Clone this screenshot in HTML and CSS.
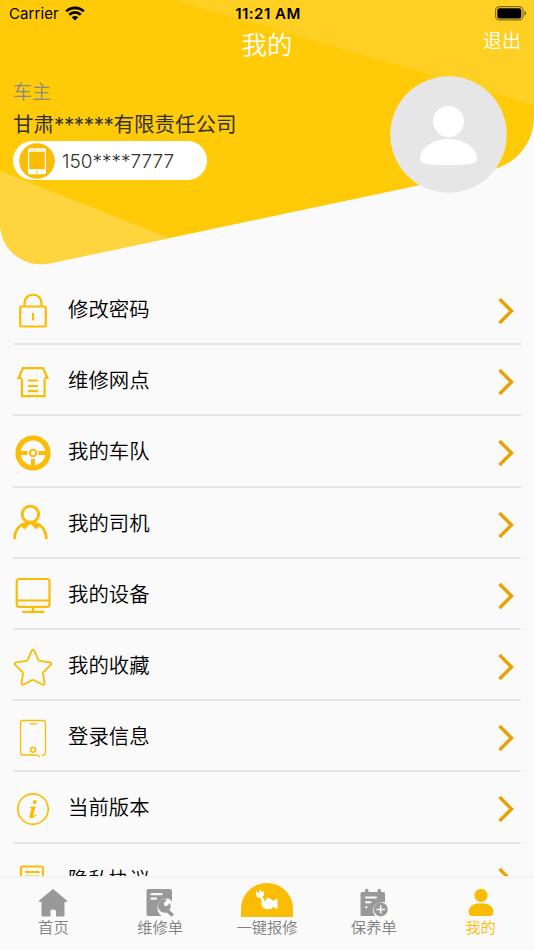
FILE: index.html
```html
<!DOCTYPE html>
<html lang="zh-CN">
  <head>
    <meta charset="UTF-8">
    <meta name="viewport" content="width=device-width, initial-scale=1.0">
    <title>我的</title>
    <link rel="stylesheet" href="styles.css">
  </head>

  <body>

    <header class="header">
      <svg class="header-bg" viewBox="0 0 534 273" aria-hidden="true">
        <defs>
          <clipPath id="shape">
            <path d="M0 0H534V117C534 143 516 165 489 170.500L49 263.500C23 268 0 249 0 223Z"/>
          </clipPath>
        </defs>
        <g clip-path="url(#shape)">
          <path fill="#ffcb08" d="M0 0H534V273H0Z"/>
          <path fill="#ffd024" d="M175 0H534V105Z"/>
          <path fill="#ffd53f" d="M0 171L169 238L100 273H0Z"/>
        </g>
      </svg>

      <div class="status">
        <div class="status-left">
          <span class="carrier">Carrier</span>
          <svg class="wifi" viewBox="0 0 20 15">
            <g fill="none" stroke="#000" stroke-width="2.700">
              <path d="M1.200 5.400C6.200 .6 13.800 .6 18.800 5.400"/>
              <path d="M4.300 8.700C7.600 5.600 12.400 5.600 15.700 8.700"/>
            </g>
            <path d="M6.700 11.200Q10 8.600 13.300 11.200L10 14.500Z"/>
          </svg>
        </div>
        <span class="time">11:21 AM</span>
        <svg class="battery" viewBox="0 0 32 15">
          <rect x=".6" y=".6" width="27.400" height="13.300" rx="3.800" fill="none" stroke="#806a1c" stroke-width="1.100"/>
          <rect x="2.300" y="2.200" width="24" height="10.200" rx="2.200"/>
          <path fill="#806a1c" d="M29.300 4.800Q31.200 5.600 31.200 7.300T29.300 9.800Z"/>
        </svg>
      </div>

      <div class="titlebar">
        <h1>我的</h1>
        <a class="logout" href="#">退出</a>
      </div>

      <div class="profile">
        <div class="owner">
          <p class="role">车主</p>
          <p class="company">甘肃<span class="stars">******</span>有限责任公司</p>
          <div class="phone">
            <svg viewBox="0 0 36 36">
              <circle cx="18" cy="18" r="17.800" fill="#fbbc05"/>
              <rect x="9.600" y="6" width="16.800" height="24.600" rx="1.300" fill="none" stroke="#fff" stroke-width="1.300"/>
              <path stroke="#fff" stroke-width="1.300" d="M10 8H26M10 27H26"/>
              <path fill="#fff" d="M9.600 27H26.400V30.500H9.600Z"/>
              <circle cx="18" cy="28.800" r=".9" fill="#fbbc05"/>
            </svg>
            <span>150****7777</span>
          </div>
        </div>
        <svg class="avatar" viewBox="0 0 117 117">
          <circle cx="58.500" cy="58.500" r="58.200" fill="#e6e6e6"/>
          <g fill="#fff">
            <circle cx="58.500" cy="45.500" r="15.400"/>
            <path d="M58.500 63C74 63 87 72 87 82.500C87 87.500 82 89 58.500 89S30 87.500 30 82.500C30 72 43 63 58.500 63Z"/>
          </g>
        </svg>
      </div>
    </header>

    <main class="menu">
      <a class="item" href="#">
        <svg class="icon" viewBox="0 0 40 40">
          <rect x="7.200" y="15.500" width="25.600" height="20" rx="1"/>
          <path d="M11.500 15.500V12.500C11.500 .8 28.500 .8 28.500 12.500V15.500M20 22V29.500"/>
        </svg>
        <span>修改密码</span>
        <svg class="arrow" viewBox="0 0 16 28"><path d="M1.500 2L13.500 14L1.500 26"/></svg>
      </a>
      <a class="item" href="#">
        <svg class="icon" viewBox="0 0 40 40">
          <path d="M8.900 17V34.200H31.600V17M8.900 16H5.500L10 6.200H30L34.500 16H31.600M15 18.500H25M15 24H25M15 29.200H25"/>
        </svg>
        <span>维修网点</span>
        <svg class="arrow" viewBox="0 0 16 28"><path d="M1.500 2L13.500 14L1.500 26"/></svg>
      </a>
      <a class="item" href="#">
        <svg class="icon" viewBox="0 0 40 40">
          <circle cx="20" cy="20" r="15" stroke-width="5.200"/>
          <circle cx="20" cy="20" r="3.200" stroke-width="2"/>
          <path stroke-width="4" d="M7 20H14.500M25.500 20H33M20 26V33"/>
        </svg>
        <span>我的车队</span>
        <svg class="arrow" viewBox="0 0 16 28"><path d="M1.500 2L13.500 14L1.500 26"/></svg>
      </a>
      <a class="item" href="#">
        <svg class="icon" viewBox="0 0 40 40">
          <circle cx="17.400" cy="9.300" r="8.200" stroke-width="2.900"/>
          <path stroke-width="2.900" stroke-linecap="round" d="M1.600 33C1.600 26 5.500 21 9.500 19.500L17.400 17L25.300 19.500C29.300 21 33.200 26 33.200 33M9 19.500L11.500 22.500L17.400 17L23.300 22.500L25.800 19.500"/>
        </svg>
        <span>我的司机</span>
        <svg class="arrow" viewBox="0 0 16 28"><path d="M1.500 2L13.500 14L1.500 26"/></svg>
      </a>
      <a class="item" href="#">
        <svg class="icon" viewBox="0 0 40 40">
          <rect x="3.700" y="3" width="32.800" height="27.800" rx="2.500"/>
          <path stroke-linecap="round" d="M4 24.500H36M20 31.200V35.500M10 35.800H30.500"/>
        </svg>
        <span>我的设备</span>
        <svg class="arrow" viewBox="0 0 16 28"><path d="M1.500 2L13.500 14L1.500 26"/></svg>
      </a>
      <a class="item" href="#">
        <svg class="icon" viewBox="0 0 40 40">
          <path stroke-width="1.800" stroke-linejoin="round" d="M18.500 4.200Q20 1.200 21.500 4.200L25.200 12.600Q25.600 13.600 26.800 13.800L36.800 15.300Q39.600 16 37.500 18.200L30.500 25Q29.800 25.800 30 27L31.500 35.500Q31.700 38.500 29 37.500L21.200 33.200Q20 32.600 18.800 33.200L11 37.500Q8.300 38.500 8.500 35.500L10 27Q10.200 25.800 9.500 25L2.500 18.200Q.4 16 3.200 15.300L13.200 13.800Q14.400 13.600 14.800 12.600Z"/>
        </svg>
        <span>我的收藏</span>
        <svg class="arrow" viewBox="0 0 16 28"><path d="M1.500 2L13.500 14L1.500 26"/></svg>
      </a>
      <a class="item" href="#">
        <svg class="icon" viewBox="0 0 40 40">
          <path stroke-width="1.300" stroke-linecap="round" d="M29 37.300C31.500 37.500 32.500 36.500 32.500 34.500V5Q32.500 2.500 30 2.500H10Q7.500 2.500 7.500 5V34.500Q7.500 37 10 37H22Q25 37 26.500 38.500M17 5.800H23.500"/>
          <circle cx="20" cy="31.800" r="2.500" stroke-width="1.600"/>
        </svg>
        <span>登录信息</span>
        <svg class="arrow" viewBox="0 0 16 28"><path d="M1.500 2L13.500 14L1.500 26"/></svg>
      </a>
      <a class="item" href="#">
        <svg class="icon" viewBox="0 0 40 40">
          <circle cx="20" cy="20" r="15.200" stroke-width="1.700"/>
          <circle class="solid" cx="21.800" cy="13" r="2.100"/>
          <path class="solid" d="M16.500 18.200L22.800 16.900L20.300 25.800Q20 27.200 21.500 26.200L23.200 24.700L23.800 25.300C21.500 28.400 19 29.700 17.200 29.200C16 28.800 16.200 27.300 16.600 26L18.500 19.600Q18.700 18.800 16.500 19Z"/>
        </svg>
        <span>当前版本</span>
        <svg class="arrow" viewBox="0 0 16 28"><path d="M1.500 2L13.500 14L1.500 26"/></svg>
      </a>
      <a class="item" href="#">
        <svg class="icon" viewBox="0 0 40 40">
          <path d="M8 36V7.500Q8 5.500 10 5.500H28Q30 5.500 30 7.500V36ZM12 11H26.500M12 15.500H26.500M12 21H26.500"/>
        </svg>
        <span>隐私协议</span>
        <svg class="arrow" viewBox="0 0 16 28"><path d="M1.500 2L13.500 14L1.500 26"/></svg>
      </a>
    </main>

    <nav class="tabbar">
      <a class="tab" href="#">
        <svg class="tab-icon" viewBox="0 0 30 30">
          <path d="M15 0L28.800 11.500V13H26.500V26Q26.500 27.500 25 27.500H18V22.500Q18 20.500 15.200 20.500T12.500 22.500V27.500H5Q3.500 27.500 3.500 26V13H1.200V11.500Z"/>
        </svg>
        <span>首页</span>
      </a>
      <a class="tab" href="#">
        <svg class="tab-icon" viewBox="0 0 30 30">
          <path d="M3 0H25Q27 0 27 2V12.500L24.500 10L21.500 9.500Q14 10.500 12.500 16.500V21Q13.500 25 17 27H3Q1.500 27 1.500 25V2Q1.500 0 3 0Z"/>
          <path stroke="#fafafa" stroke-width="2.200" stroke-linecap="round" d="M6.500 5.200H16.500M6.500 9.700H11"/>
          <path d="M20 10.300L22 10.800L18.800 14.300L19.300 16.800L21.700 17.200L25 14L25.500 16.500C25.800 18.500 25.200 20 24.200 21L29 25.300L26.500 27.800L21.700 23.500C17 24.500 13 21.500 13 17C13 13 16.500 10.200 20 10.300Z"/>
        </svg>
        <span>维修单</span>
      </a>
      <a class="tab" href="#">
        <svg class="tab-icon wide" viewBox="0 0 52 34">
          <path fill="#fbbc05" d="M0 34V26C0 11.500 11.500 0 26 0S52 11.500 52 26V34Z"/>
          <path fill="#fff" d="M20.500 16.500L24 18.500L27 14.500L32 17.500H34V16H36.500V25.500H34V24L31 24.500L30 26.500L28.500 25.500L26 26.500L22.500 25L20.500 22Z"/>
          <path fill="none" stroke="#fff" stroke-width="2.300" d="M19 7.500L20.200 10.500L18 12L16 10.200C16 13 17.500 14 19.500 13.500L23 18M19.500 13.500C22 13 22.500 10.500 21.500 9"/>
        </svg>
        <span>一键报修</span>
      </a>
      <a class="tab" href="#">
        <svg class="tab-icon" viewBox="0 0 30 30">
          <path d="M3 3H6V1Q7.800 -1.500 9.500 1V3H18.500V1Q20.300 -1.500 22 1V3H24.500Q26 3 26 4.500V13Q14.500 12.500 14 21Q14 24.500 16 27H3Q1.500 27 1.500 25.500V4.500Q1.500 3 3 3Z"/>
          <path stroke="#fafafa" stroke-width="2" stroke-linecap="round" d="M7 8.500H17M7 13.300H11.500M7 18.200H7.500"/>
          <circle cx="21.700" cy="20.400" r="7"/>
          <path stroke="#fafafa" stroke-width="1.500" d="M17.500 20.400H26M21.700 16.200V24.600"/>
        </svg>
        <span>保养单</span>
      </a>
      <a class="tab active" href="#">
        <svg class="tab-icon" viewBox="0 0 30 30">
          <circle cx="15" cy="6.300" r="6.600"/>
          <path d="M2.600 23C2.600 17.500 7.500 14.200 15 14.200S27.400 17.500 27.400 23C27.400 26 26 27 24 27H6C4 27 2.600 26 2.600 23Z"/>
        </svg>
        <span>我的</span>
      </a>
    </nav>

  </body>
</html>
```

FILE: styles.css
```css
html {
  box-sizing: border-box;
}

*,
*::before,
*::after {
  box-sizing: inherit;
}

body {
  display: flex;
  flex-direction: column;
  height: 950px;
  margin: 0;
  overflow: hidden;
  background: #fafafa;
  color: #000;
  font-family: Inter, "Noto Sans CJK SC", sans-serif;
}

a {
  color: inherit;
  text-decoration: none;
}

h1,
p {
  margin: 0;
  font-weight: 350;
}

svg {
  display: block;
  flex: none;
  overflow: visible;
}

/* Header */
.header {
  position: relative;
  flex: none;
  height: 274px;
}

.header-bg {
  position: absolute;
  top: 0;
  left: 0;
  z-index: -1;
  width: 534px;
  height: 273px;
}

.status {
  display: grid;
  grid-template-columns: 1fr auto 1fr;
  align-items: center;
  height: 27px;
  padding: 0 7px 0 9px;
  font-size: 15px;
  line-height: 27px;
}

.status-left {
  display: flex;
  align-items: center;
  gap: 6px;
}

.carrier {
  letter-spacing: 0.1px;
}

.wifi {
  width: 20px;
  height: 15px;
}

.time {
  font-weight: 600;
  letter-spacing: 0.5px;
}

.battery {
  justify-self: end;
  width: 32px;
  height: 15px;
}

.titlebar {
  display: grid;
  grid-template-columns: 1fr auto 1fr;
  height: 49px;
  padding: 0 13px;
  color: #fff;
}

.titlebar h1 {
  grid-column: 2;
  font-size: 25.4px;
  line-height: 35px;
}

.logout {
  justify-self: end;
  font-size: 19px;
  font-weight: 350;
  line-height: 29px;
}

.profile {
  display: flex;
  justify-content: space-between;
  padding: 0 27px 0 13px;
}

.role {
  color: #888;
  font-size: 19px;
  line-height: 33px;
}

.company {
  margin-top: -1px;
  color: #333;
  font-size: 20.5px;
  font-weight: 400;
  line-height: 33px;
}

.stars {
  letter-spacing: -0.35px;
}

.phone {
  display: flex;
  align-items: center;
  width: 194px;
  height: 39px;
  padding-left: 6px;
  gap: 7px;
  border-radius: 20px;
  background: #fff;
  color: #333;
  font-size: 19px;
  font-weight: 350;
}

.phone span {
  margin-top: 1px;
}

.phone svg {
  width: 36px;
  height: 36px;
}

.avatar {
  width: 117px;
  height: 117px;
}

/* Menu */
.menu {
  flex: 1;
  min-height: 0;
  overflow: hidden;
}

.item {
  display: flex;
  align-items: center;
  height: 71.2px;
  margin: 0 13px;
  padding: 5px 7px 0 0;
  border-bottom: 2px solid #e5e5e5;
  font-size: 20.4px;
  font-weight: 350;
}

.item span {
  flex: 1;
  margin: -6px 0 0 15px;
}

.icon {
  width: 40px;
  height: 40px;
  fill: none;
  stroke: #fbbc05;
  stroke-width: 2.2;
}

.icon .solid {
  fill: #fbbc05;
  stroke: none;
}

.arrow {
  width: 16px;
  height: 28px;
  fill: none;
  stroke: #e8a208;
  stroke-width: 3.4;
}

/* Tab bar */
.tabbar {
  display: flex;
  flex: none;
  height: 74px;
  border-top: 2px solid #f3f3f3;
  background: #fafafa;
  color: #808080;
  font-size: 15.3px;
  font-weight: 350;
  line-height: 22px;
}

.tab {
  display: flex;
  flex: 1;
  flex-direction: column;
  align-items: center;
  justify-content: flex-end;
  padding-bottom: 11px;
}

.tab-icon {
  width: 30px;
  height: 30px;
  margin-bottom: -2px;
  fill: #999;
}

.tab-icon.wide {
  width: 52px;
  height: 34px;
  margin-bottom: 0;
}

.active {
  color: #fbbc05;
}

.active .tab-icon {
  fill: #fbbc05;
}
```
